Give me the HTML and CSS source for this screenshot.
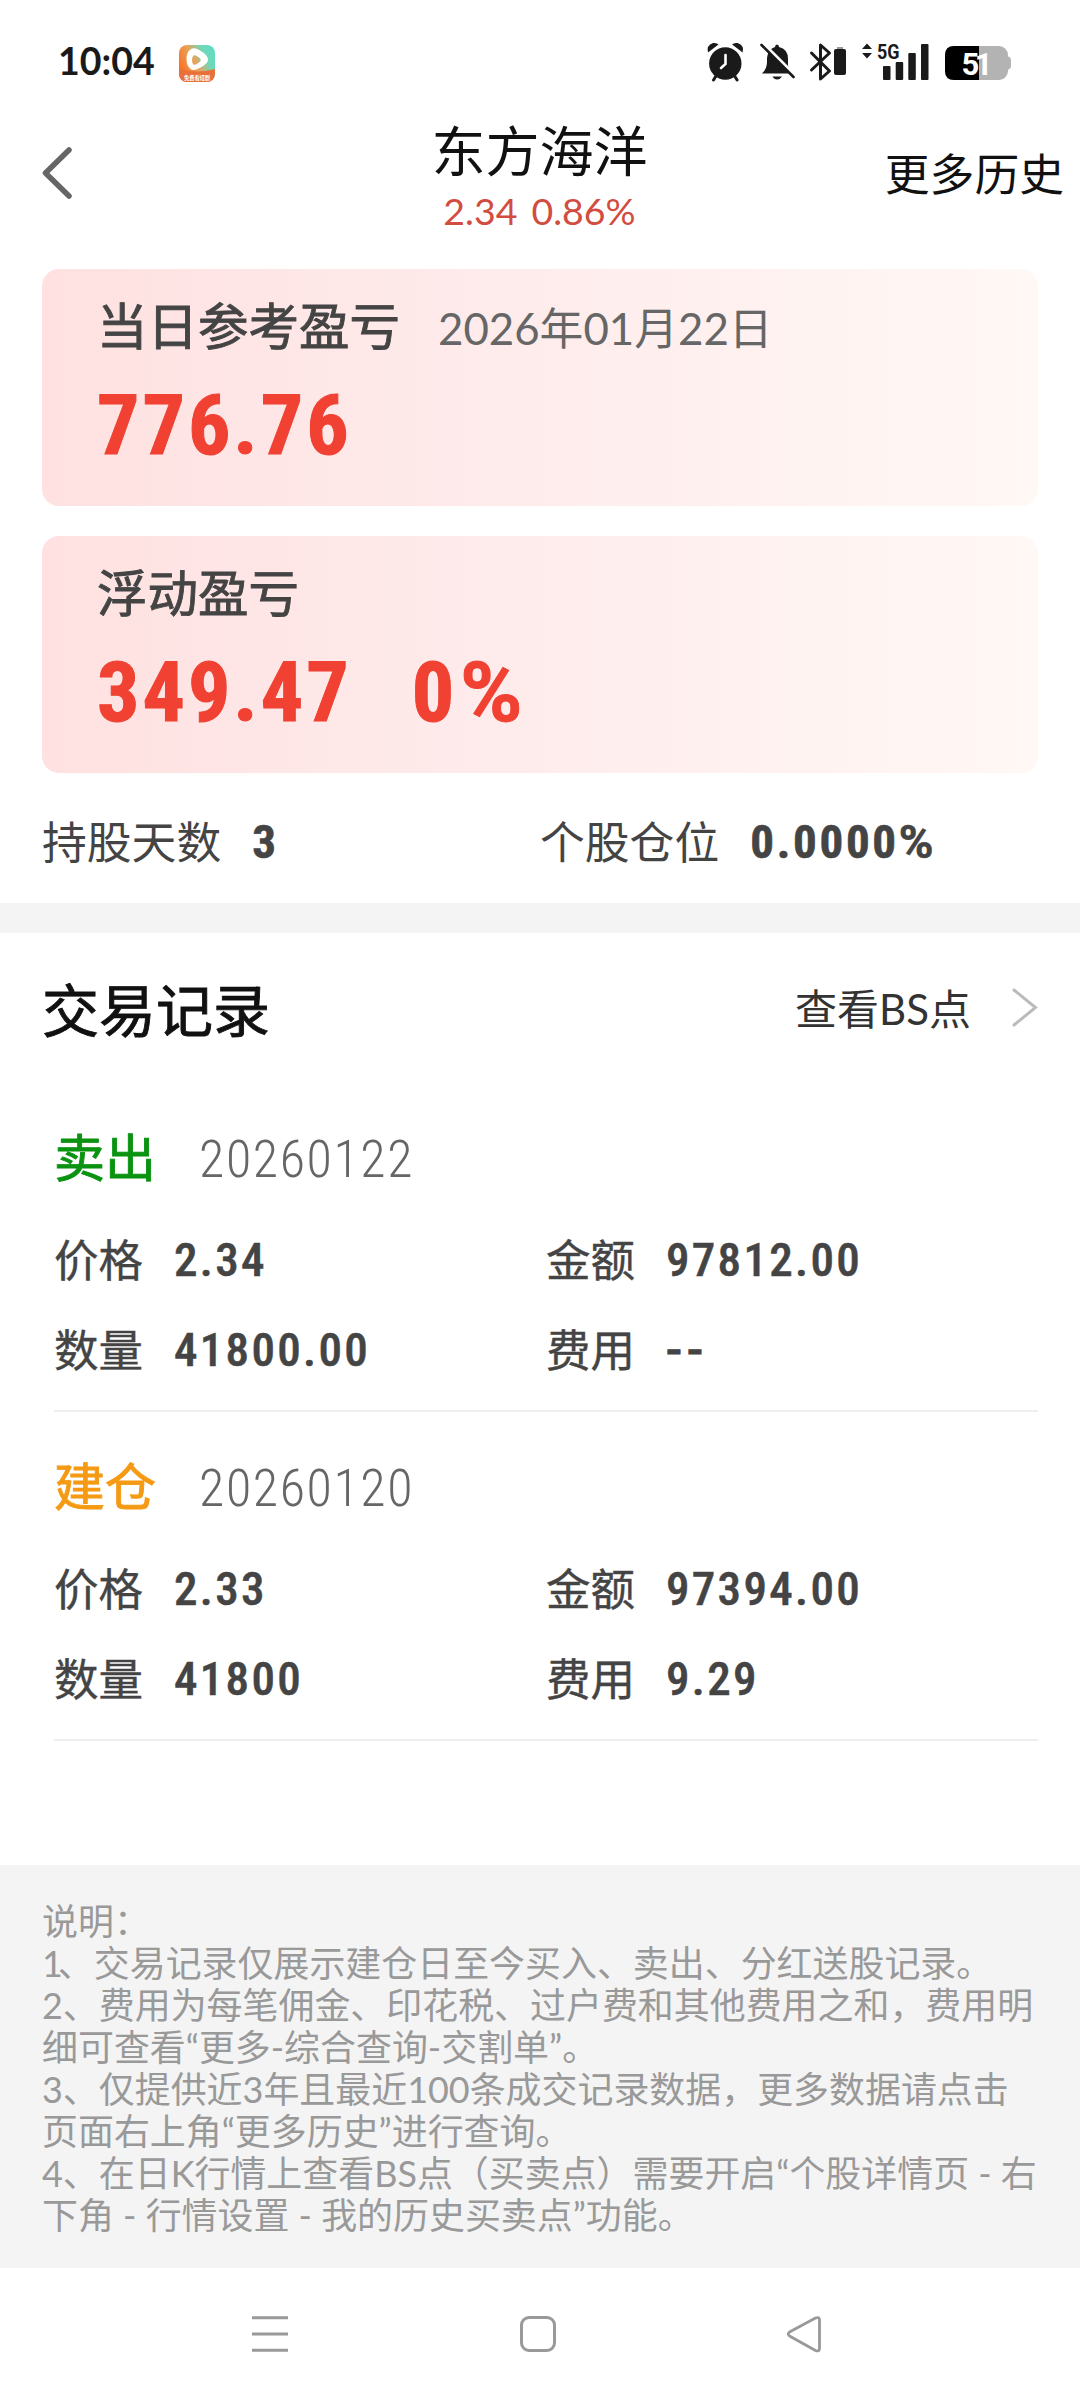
FILE: index.html
```html
<!DOCTYPE html>
<html lang="zh-CN">
<head>
<meta charset="utf-8">
<title>东方海洋</title>
<link rel="stylesheet" href="styles.css">
</head>
<body>
<div class="screen">
  <div class="status">
    <span class="clock">10:04</span>
    <svg class="app-icon" width="36" height="37" viewBox="0 0 36 37">
      <defs>
        <linearGradient id="app" x1="0" y1="0.7" x2="1" y2="0.2">
          <stop offset="0" stop-color="#fb6a1e"/><stop offset="0.45" stop-color="#e9a35a"/><stop offset="0.75" stop-color="#6fd8b8"/><stop offset="1" stop-color="#5fdcc4"/>
        </linearGradient>
        <clipPath id="appclip"><rect width="36" height="37" rx="8"/></clipPath>
      </defs>
      <g clip-path="url(#appclip)">
        <rect width="36" height="37" fill="url(#app)"/>
        <path d="M0 24Q18 29 36 24V37H0z" fill="#e8703a"/>
        <path fill="#fff" fill-rule="evenodd" d="M11.500 4.500Q15 1.500 21 5.500Q29 10 29 14.500Q29 18.500 21.500 22.500Q15 26.500 11.500 24Q7.500 21 7.500 14Q7.500 7 11.500 4.500zM14.500 10.500Q13 12 13 15Q13 18 14.500 19.500Q16 20.500 20 17.500Q23.500 15 20 12.500Q16 9.500 14.500 10.500z"/>
        <text class="app-text" x="18" y="34.500" text-anchor="middle">免费看短剧</text>
      </g>
    </svg>
    <svg class="status-icons" width="320" height="44" viewBox="700 40 320 44">
      <g fill="#1a1a1a">
        <circle cx="725.300" cy="63.500" r="16.200"/>
        <path d="M708 52.500Q706 45.500 713 43Q717 42.500 718.500 44.500zM742.600 52.500Q744.600 45.500 737.600 43Q733.600 42.500 732.100 44.500z"/>
        <path d="M716 76L713.500 80M734.600 76L737.100 80" stroke="#1a1a1a" stroke-width="3" stroke-linecap="round"/>
        <path d="M725.500 55V64L721 68" stroke="#fff" stroke-width="2.600" fill="none" stroke-linecap="round"/>
        <path d="M777 44.500Q779 44.500 779 47Q788 49 788 59V65Q788 70 794 73.500H762Q767 69 767 62V58Q768 49 775 47Q775 44.500 777 44.500z"/>
        <path d="M772.500 76.500H782Q780 79.500 777.200 79.500Q774 79.500 772.500 76.500z"/>
        <path d="M764 44.500L797 77.500" stroke="#fff" stroke-width="3.500"/>
        <path d="M761.500 45L793.500 77" stroke="#1a1a1a" stroke-width="2.600" stroke-linecap="round"/>
        <path d="M811.500 53L829.500 71L820.500 79V45L829.500 53L811.500 70" fill="none" stroke="#1a1a1a" stroke-width="3" stroke-linejoin="round" stroke-linecap="round"/>
        <rect x="834" y="49" width="12" height="26" rx="2"/>
        <rect x="837" y="47" width="6" height="2" fill="#999"/>
        <path d="M867 43.500L872 49H862zM867 58.500L872 53H862z"/>
        <rect x="883" y="66" width="7.500" height="14" rx="1"/>
        <rect x="895.700" y="62" width="7.500" height="18" rx="1"/>
        <rect x="908.300" y="53" width="7.500" height="27" rx="1"/>
        <rect x="921" y="44" width="7.500" height="36" rx="1"/>
        <text class="net" x="877" y="58.500" textLength="22.500" lengthAdjust="spacingAndGlyphs">5G</text>
      </g>
      <rect x="945" y="46" width="63" height="34" rx="9" fill="#b3b3b3"/>
      <path d="M979 46H954Q945 46 945 55V71Q945 80 954 80H979z" fill="#000"/>
      <path d="M1007 56Q1011 57 1011 60V66Q1011 69 1007 70z" fill="#b3b3b3"/>
      <text class="level" x="961.500" y="75" textLength="31" lengthAdjust="spacing">51</text>
    </svg>
  </div>

  <header class="header">
    <svg class="back" width="36" height="56" viewBox="0 0 36 56"><path d="M31 5L7.500 28L31 51" fill="none" stroke="#666" stroke-width="5.500" stroke-linecap="round" stroke-linejoin="round"/></svg>
    <div class="heading">
      <h1 class="title">东方海洋</h1>
      <div class="quote"><span>2.34</span><span>0.86%</span></div>
    </div>
    <span class="more">更多历史</span>
  </header>

  <section class="cards">
    <div class="card">
      <div class="card-head"><span class="card-label">当日参考盈亏</span><span class="card-date">2026年01月22日</span></div>
      <div class="card-value"><span>776.76</span></div>
    </div>
    <div class="card">
      <div class="card-head"><span class="card-label">浮动盈亏</span></div>
      <div class="card-value"><span>349.47</span><span class="rate">0<span class="percent">%</span></span></div>
    </div>
  </section>

  <section class="stats">
    <div class="stat"><span>持股天数</span><b class="stat-value">3</b></div>
    <div class="stat"><span>个股仓位</span><b class="stat-value">0.0000<span class="percent">%</span></b></div>
  </section>

  <section class="trades">
    <div class="trades-head">
      <h2 class="trades-title">交易记录</h2>
      <span class="bs">查看BS点</span>
      <svg class="arrow" width="28" height="42" viewBox="0 0 28 42"><path d="M3 3L24.500 20.500L3 38" fill="none" stroke="#bbb" stroke-width="3" stroke-linecap="round"/></svg>
    </div>
    <article class="record">
      <div class="record-head"><span class="side sell">卖出</span><span class="record-date">20260122</span></div>
      <div class="record-row">
        <div class="field"><span class="key">价格</span><span class="val">2.34</span></div>
        <div class="field"><span class="key">金额</span><span class="val">97812.00</span></div>
      </div>
      <div class="record-row">
        <div class="field"><span class="key">数量</span><span class="val">41800.00</span></div>
        <div class="field"><span class="key">费用</span><span class="val dashes">--</span></div>
      </div>
    </article>
    <article class="record">
      <div class="record-head"><span class="side open">建仓</span><span class="record-date">20260120</span></div>
      <div class="record-row">
        <div class="field"><span class="key">价格</span><span class="val">2.33</span></div>
        <div class="field"><span class="key">金额</span><span class="val">97394.00</span></div>
      </div>
      <div class="record-row">
        <div class="field"><span class="key">数量</span><span class="val">41800</span></div>
        <div class="field"><span class="key">费用</span><span class="val">9.29</span></div>
      </div>
    </article>
  </section>

  <section class="notes">
    <p>说明：</p>
    <p><span class="narrow">1</span>、交易记录仅展示建仓日至今买入、卖出、分红送股记录。</p>
    <p>2、费用为每笔佣金、印花税、过户费和其他费用之和，费用明<br>细可查看“更多-综合查询-交割单”。</p>
    <p>3、仅提供近3年且最近100条成交记录数据，更多数据请点击<br>页面右上角“更多历史”进行查询。</p>
    <p>4、在日K行情上查看BS点（买卖点）需要开启“个股详情页 - 右<br>下角 - 行情设置 - 我的历史买卖点”功能。</p>
  </section>

  <nav class="nav">
    <svg width="40" height="40" viewBox="0 0 40 40"><path d="M2 3.700H38M2 20H38M2 36.300H38" stroke="#999" stroke-width="3"/></svg>
    <svg width="40" height="40" viewBox="0 0 40 40"><rect x="4.500" y="3.500" width="33" height="33" rx="7.500" fill="none" stroke="#999" stroke-width="3"/></svg>
    <svg width="40" height="40" viewBox="0 0 40 40"><path d="M31.500 4L5.500 18Q3 20 5.500 22L31.500 36.500Q35.500 38 35.500 34.500V6Q35.500 2.500 31.500 4z" fill="none" stroke="#999" stroke-width="2.800" stroke-linejoin="round"/></svg>
  </nav>
</div>
</body>
</html>
```
FILE: styles.css
```css
* { box-sizing: border-box; }
body { margin: 0; background: #fff; }
h1, h2, p { margin: 0; font-weight: 400; }
svg { display: block; flex: none; }

.screen {
  width: 1080px;
  height: 2400px;
  overflow: hidden;
  display: flex;
  flex-direction: column;
  background: #fff;
  color: #444;
  font-family: Lato, "Noto Sans CJK SC", sans-serif;
  white-space: nowrap;
}

/* Status bar */
.status { height: 110px; display: flex; align-items: flex-start; padding: 40px 60px 0 58px; }
.clock { width: 121px; font-size: 37.500px; font-weight: 700; line-height: 42px; color: #1a1a1a; }
.app-icon { margin-top: 5px; }
.app-text { font-family: "Noto Sans CJK SC", sans-serif; font-size: 5.200px; font-weight: 700; fill: #fff; }
.status-icons { margin-left: auto; }
.net { font-family: Roboto, sans-serif; font-size: 21px; font-weight: 700; }
.level { font-family: Roboto, sans-serif; font-size: 31px; font-weight: 700; fill: #fff; }

/* Header */
.header { height: 159px; display: grid; grid-template-columns: 1fr auto 1fr; padding: 0 16px 0 38px; color: #111; }
.back { margin-top: 35px; }
.heading { margin-left: -23px; text-align: center; }
.title { margin-top: 12px; font-size: 54px; line-height: 60px; }
.quote { display: flex; justify-content: center; gap: 14px; margin-top: 7px; font-size: 37.500px; line-height: 44px; color: #d24c40; }
.more { justify-self: end; margin-top: 34px; font-size: 44.800px; line-height: 60px; }

/* Summary cards */
.cards { display: flex; flex-direction: column; gap: 30px; padding: 0 42px; }
.card { height: 237px; padding: 27px 55px 0; border-radius: 17px; background: linear-gradient(90deg, #ffe1e1, #feeaea 40%, #fff8f5); }
.card-head { height: 60px; display: flex; gap: 38px; line-height: 60px; }
.card-label { font-size: 50.500px; -webkit-text-stroke: 0.900px #444; }
.card-date { font-size: 43.800px; line-height: 64px; color: #666; }
.card-value { margin-top: 26px; display: flex; gap: 60px; font: 700 84px/88px Roboto, sans-serif; font-stretch: 85%; letter-spacing: 3px; -webkit-text-stroke: 1px #f04132; color: #f04132; }
.rate { letter-spacing: 6px; }
.percent { font-stretch: 100%; }

/* Holding stats */
.stats { height: 160px; display: grid; grid-template-columns: 1fr 1fr; padding: 38px 42px 0; border-bottom: 30px solid #f4f4f4; }
.stat { display: flex; gap: 31px; font-size: 44.800px; line-height: 62px; }
.stat-value { font: 700 47px/62px Roboto, sans-serif; font-stretch: 85%; letter-spacing: 2.700px; -webkit-text-stroke: 0.600px #444; }

/* Trade list */
.trades-head { height: 150px; display: flex; align-items: center; padding: 4px 41px 0 42px; color: #111; }
.trades-title { flex: 1; font-size: 57px; line-height: 66px; -webkit-text-stroke: 0.900px #111; }
.bs { font-size: 42px; line-height: 60px; margin-top: -2px; color: #333; }
.arrow { margin: -4px 0 0 40px; }
.record { height: 329px; margin: 0 42px 0 54px; padding-top: 45px; border-bottom: 2px solid #eee; }
.record-head { height: 60px; display: flex; gap: 43px; margin-bottom: 42px; }
.side { font-size: 51px; line-height: 59px; -webkit-text-stroke: 0.900px currentColor; }
.sell { color: #0a9310; }
.open { color: #f59a14; }
.record-date { font: 300 52px/64px Roboto, sans-serif; font-stretch: 85%; letter-spacing: 1.600px; color: #666; }
.record-row { height: 60px; display: grid; grid-template-columns: 492px 1fr; margin-bottom: 30px; }
.field { display: flex; gap: 31px; }
.key { font-size: 44.500px; line-height: 60px; -webkit-text-stroke: 0.400px #444; }
.val { font: 500 47px/60px Roboto, sans-serif; font-stretch: 85%; letter-spacing: 2.300px; -webkit-text-stroke: 0.500px #444; }
.dashes { font-stretch: 100%; letter-spacing: 5px; -webkit-text-stroke: 1px #444; }

/* Notes */
.notes { height: 403px; margin-top: 124px; padding: 36px 42px 0; background: #f4f4f4; font-size: 35.950px; line-height: 42px; color: #999; }
.narrow { letter-spacing: -5px; }

/* System navigation */
.nav { height: 132px; display: flex; align-items: center; justify-content: space-between; padding: 0 256px 0 250px; }
```
